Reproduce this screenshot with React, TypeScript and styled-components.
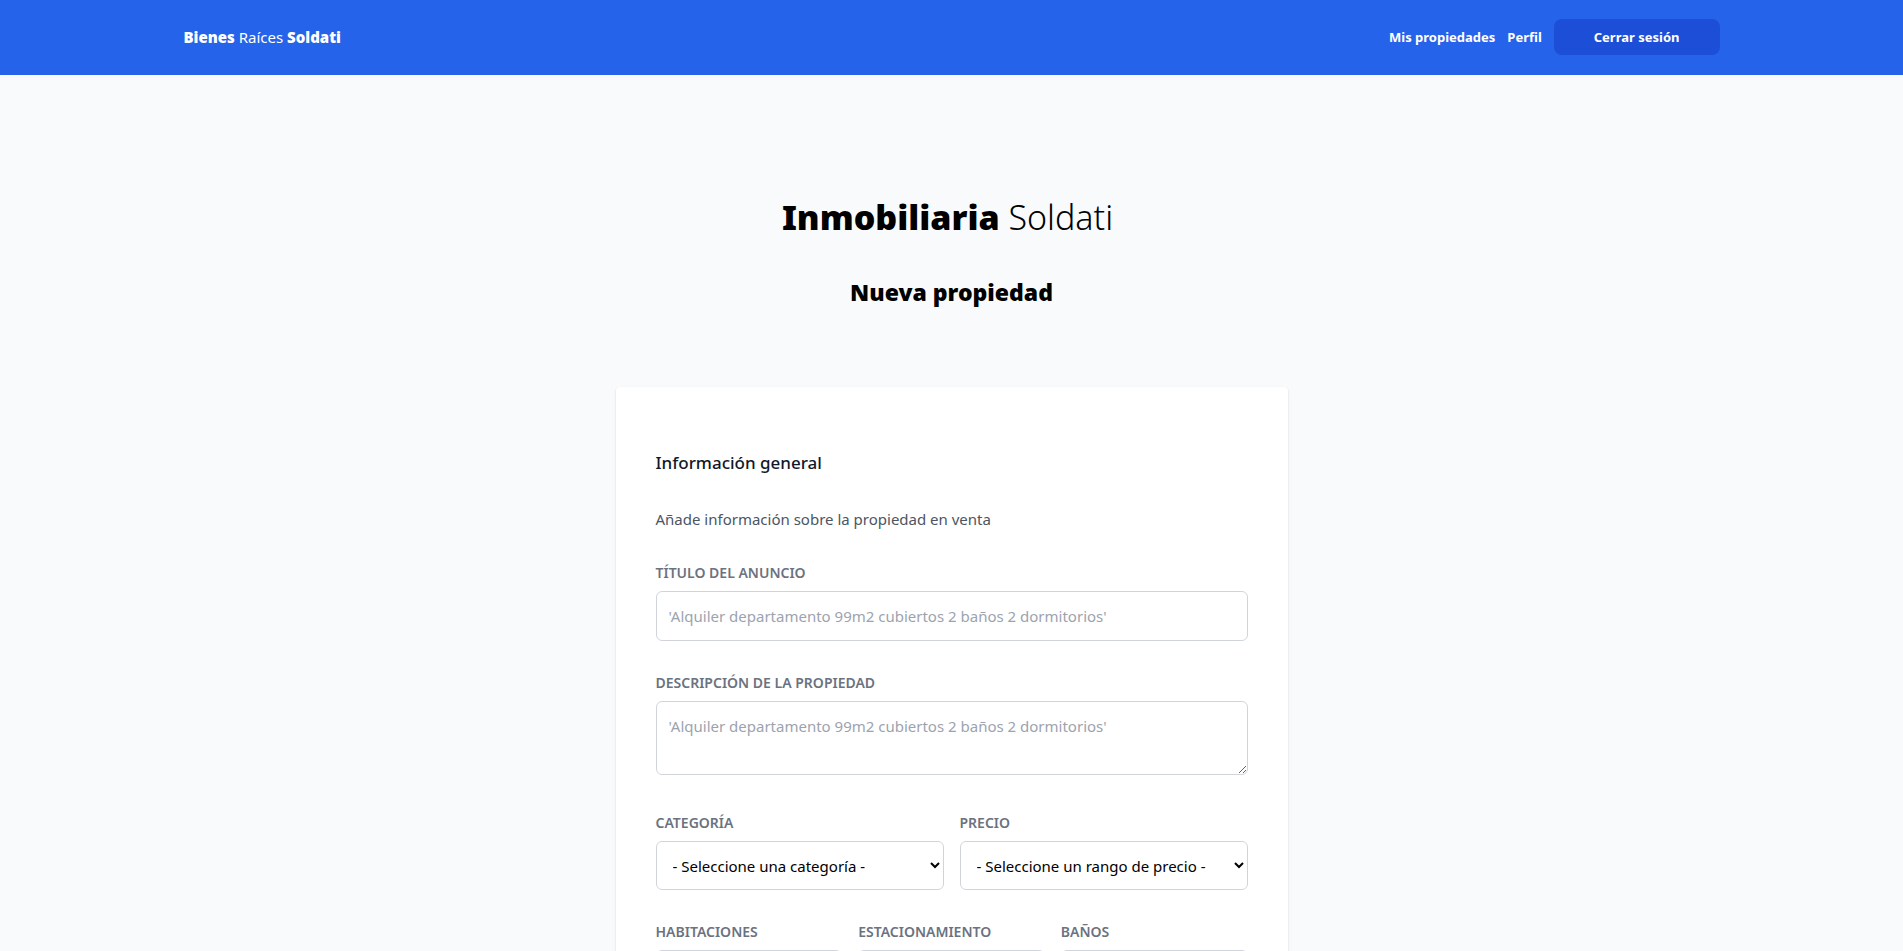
import React from 'react';
import styled, { createGlobalStyle } from 'styled-components';

const GlobalStyle = createGlobalStyle`
  *, *::before, *::after { box-sizing: border-box; }
  body {
    margin: 0;
    background: #f9fafb;
    color: #000;
    font-family: "Segoe UI", "Noto Sans", "Open Sans", sans-serif;
    font-size: 15px;
    line-height: 24px;
  }
  h1, h2, h3, p { margin: 0; }
  button, input, textarea, select { font: inherit; color: inherit; }
`;

const Header = styled.header`
  background: #2563eb;
  padding: 19px 0 20px;
`;

const HeaderInner = styled.div`
  max-width: 1536px;
  margin: 0 auto;
  display: flex;
  align-items: center;
  justify-content: space-between;
`;

const Logo = styled.a`
  color: #fff;
  font-weight: 400;
  text-decoration: none;
`;

const Heavy = styled.span`
  font-weight: 900;
`;

const Nav = styled.nav`
  display: flex;
  align-items: center;
  gap: 12px;
  font-size: 13px;
  line-height: 20px;
`;

const NavLink = styled.a`
  color: #fff;
  font-weight: 700;
  text-decoration: none;
`;

const LogoutButton = styled.button`
  padding: 8px 40px;
  border: 0;
  border-radius: 8px;
  background: #1d4ed8;
  color: #fff;
  font-weight: 700;
  cursor: pointer;
`;

const Main = styled.main`
  max-width: 1536px;
  margin: 0 auto;
  padding: 122px 0 80px;
`;

const Brand = styled.h1`
  padding-right: 8px;
  font-size: 34px;
  line-height: 40px;
  font-weight: 300;
  text-align: center;
`;

const PageTitle = styled.h2`
  margin-top: 40px;
  font-size: 23px;
  line-height: 30px;
  font-weight: 900;
  text-align: center;
`;

const Card = styled.div`
  max-width: 672px;
  margin: 80px auto 0;
  padding: 64px 40px 40px;
  border-radius: 4px;
  background: #fff;
  box-shadow: 0 1px 3px rgba(0, 0, 0, 0.1), 0 1px 2px rgba(0, 0, 0, 0.06);
`;

const Form = styled.form`
  display: flex;
  flex-direction: column;
  gap: 32px;
`;

const SectionTitle = styled.h3`
  font-size: 17px;
  line-height: 24px;
  font-weight: 500;
  color: #111827;
`;

const Hint = styled.p`
  color: #4b5563;
`;

const Field = styled.div`
  min-width: 0;
`;

const Label = styled.label`
  display: block;
  margin-bottom: 8px;
  font-size: 14px;
  line-height: 20px;
  font-weight: 600;
  text-transform: uppercase;
  color: #6b7280;
`;

const control = `
  width: 100%;
  padding: 12px;
  border: 1px solid #d1d5db;
  border-radius: 6px;
  background: #fff;
  &::placeholder { color: #9ca3af; opacity: 1; }
`;

const Input = styled.input`
  ${control}
  display: block;
  height: 50px;
`;

const TextArea = styled.textarea`
  ${control}
  height: 74px;
  vertical-align: baseline;
`;

const Select = styled.select`
  ${control}
  display: block;
  height: 49px;
`;

const Columns = styled.div<{ $count: number }>`
  display: grid;
  grid-template-columns: repeat(${(p) => p.$count}, 1fr);
  gap: 16px;
`;

const PLACEHOLDER = "'Alquiler departamento 99m2 cubiertos 2 baños 2 dormitorios'";

function SelectField({ id, label, options }: { id: string; label: string; options: string[] }) {
  return (
    <Field>
      <Label htmlFor={id}>{label}</Label>
      <Select id={id} name={id}>
        {options.map((option) => (
          <option key={option}>{option}</option>
        ))}
      </Select>
    </Field>
  );
}

const AMOUNTS = ['- Seleccione -', '1', '2', '3', '4'];

export default function App() {
  return (
    <>
      <GlobalStyle />
      <Header>
        <HeaderInner>
          <Logo href="#">
            <Heavy>Bienes</Heavy> Raíces <Heavy>Soldati</Heavy>
          </Logo>
          <Nav>
            <NavLink href="#">Mis propiedades</NavLink>
            <NavLink href="#">Perfil</NavLink>
            <LogoutButton type="button">Cerrar sesión</LogoutButton>
          </Nav>
        </HeaderInner>
      </Header>
      <Main>
        <Brand>
          <Heavy>Inmobiliaria</Heavy> Soldati
        </Brand>
        <PageTitle>Nueva propiedad</PageTitle>
        <Card>
          <Form>
            <SectionTitle>Información general</SectionTitle>
            <Hint>Añade información sobre la propiedad en venta</Hint>
            <Field>
              <Label htmlFor="titulo">Título del anuncio</Label>
              <Input id="titulo" name="titulo" type="text" placeholder={PLACEHOLDER} />
            </Field>
            <Field>
              <Label htmlFor="descripcion">Descripción de la propiedad</Label>
              <TextArea id="descripcion" name="descripcion" placeholder={PLACEHOLDER} />
            </Field>
            <Columns $count={2}>
              <SelectField id="categoria" label="Categoría" options={['- Seleccione una categoría -']} />
              <SelectField id="precio" label="Precio" options={['- Seleccione un rango de precio -']} />
            </Columns>
            <Columns $count={3}>
              <SelectField id="habitaciones" label="Habitaciones" options={AMOUNTS} />
              <SelectField id="estacionamiento" label="Estacionamiento" options={AMOUNTS} />
              <SelectField id="banos" label="Baños" options={AMOUNTS} />
            </Columns>
          </Form>
        </Card>
      </Main>
    </>
  );
}
